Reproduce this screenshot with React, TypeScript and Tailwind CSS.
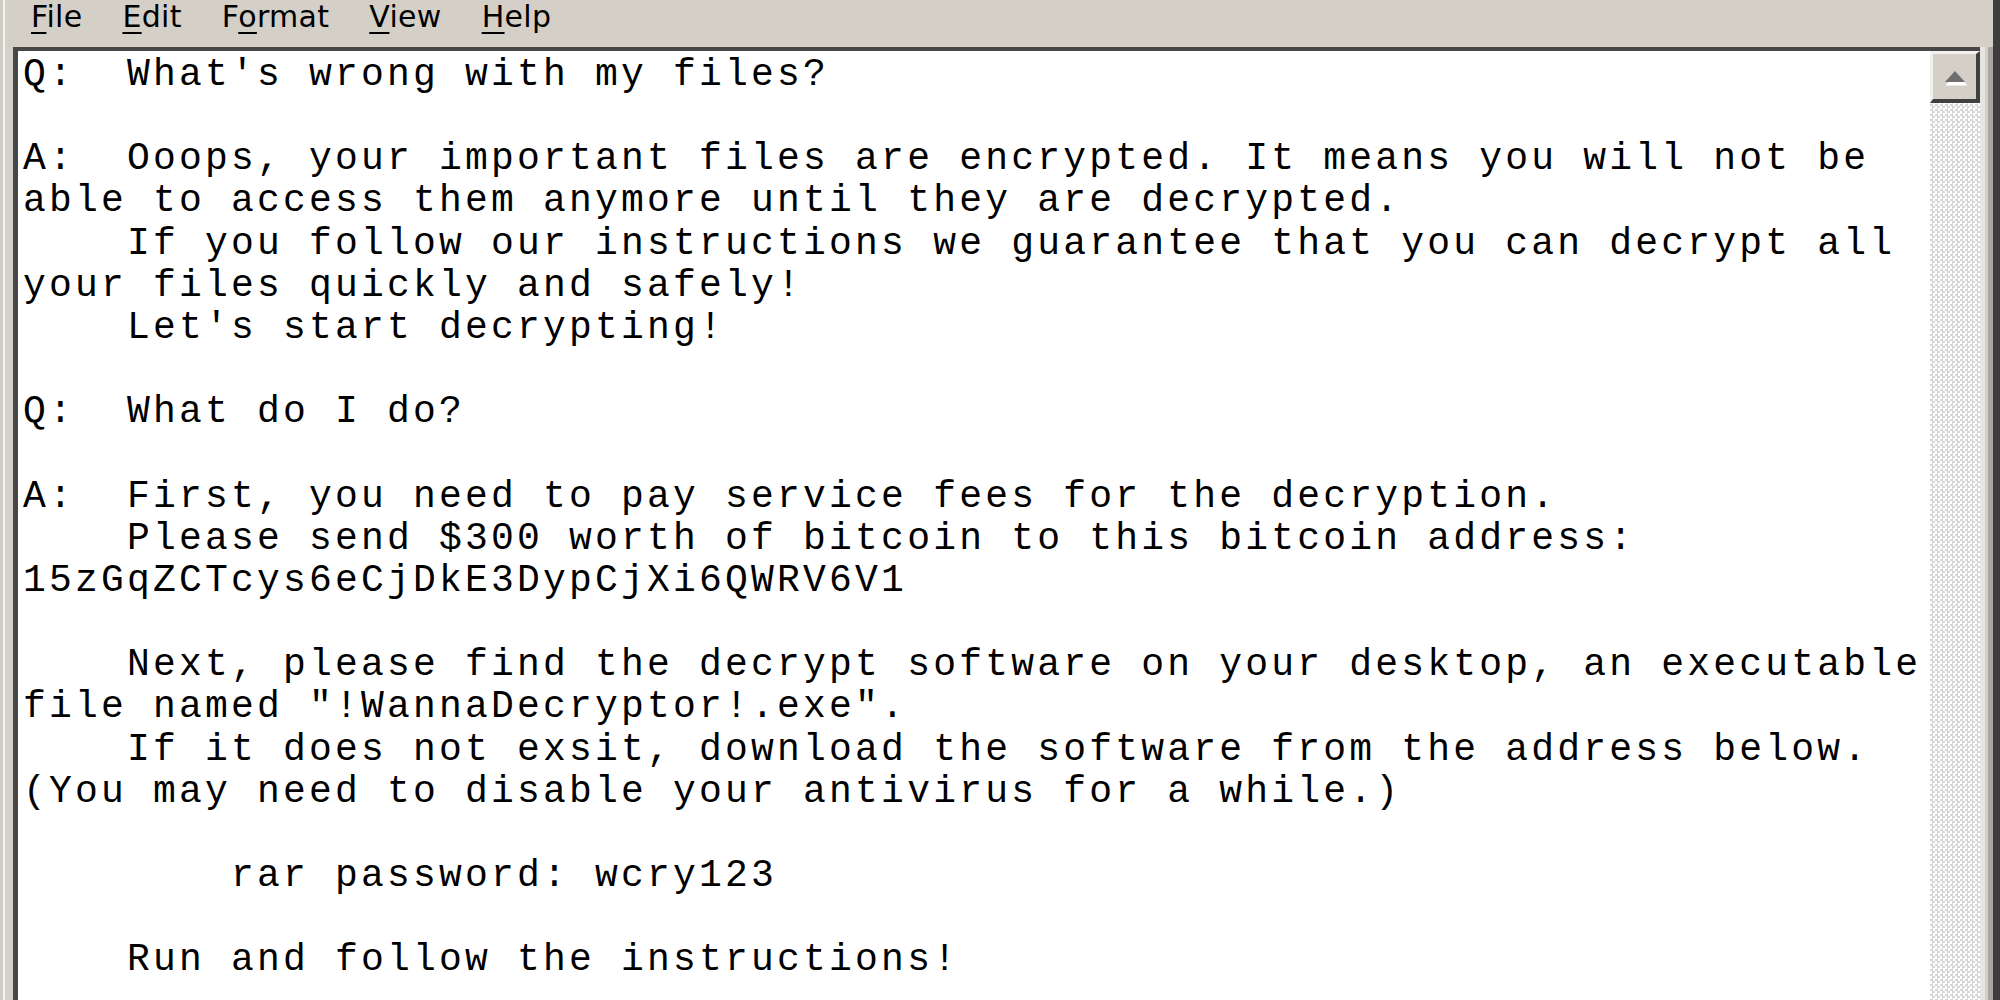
const noteText = `Q:  What's wrong with my files?

A:  Ooops, your important files are encrypted. It means you will not be
able to access them anymore until they are decrypted.
    If you follow our instructions we guarantee that you can decrypt all
your files quickly and safely!
    Let's start decrypting!

Q:  What do I do?

A:  First, you need to pay service fees for the decryption.
    Please send $300 worth of bitcoin to this bitcoin address:
15zGqZCTcys6eCjDkE3DypCjXi6QWRV6V1

    Next, please find the decrypt software on your desktop, an executable
file named "!WannaDecryptor!.exe".
    If it does not exsit, download the software from the address below.
(You may need to disable your antivirus for a while.)

        rar password: wcry123

    Run and follow the instructions!`;

const menus = [
  { key: "F", rest: "ile", before: "" },
  { key: "E", rest: "dit", before: "" },
  { key: "o", rest: "rmat", before: "F" },
  { key: "V", rest: "iew", before: "" },
  { key: "H", rest: "elp", before: "" },
];

const UpArrow = () => (
  <svg width="24" height="18" viewBox="0 0 24 18">
    <polygon points="12,3 23,16 1,16" fill="#ffffff" transform="translate(1.5,1.5)" />
    <polygon points="12,3 22,14 2,14" fill="#6e6e6e" />
  </svg>
);

const App = () => {
  return (
    <div className="w-[2000px] h-[1000px] bg-[#d4d0c8] flex overflow-hidden">
      {/* window left frame */}
      <div className="w-[13px] h-full flex-shrink-0 bg-[#d4d0c8] border-l-[3px] border-[#cfccc4]">
        <div className="h-full w-[2px] bg-[#f4f3ef]" />
      </div>

      <div className="flex-1 flex flex-col min-w-0">
        {/* menu bar */}
        <div className="h-[47px] flex-shrink-0 flex items-start pl-[18px] gap-[40px] font-['DejaVu_Sans',sans-serif] text-[30px] leading-[34px] tracking-[0.3px] text-black">
          {menus.map((m) => (
            <span key={m.key + m.rest}>
              {m.before}
              <span className="underline underline-offset-[5px] decoration-[2px]">{m.key}</span>
              {m.rest}
            </span>
          ))}
        </div>

        {/* edit area + scrollbar */}
        <div className="flex-1 flex min-h-0">
          <div className="flex-1 flex border-t-[4px] border-l-[5px] border-[#474747] min-w-0">
            <div className="flex-1 bg-white overflow-hidden pl-[5px] pt-[3px]">
              <pre className="font-['Liberation_Mono',monospace] text-[38px] leading-[42.15px] tracking-[3.2px] text-black whitespace-pre">
                {noteText}
              </pre>
            </div>

            <div className="w-[50px] flex-shrink-0 flex flex-col bg-[repeating-conic-gradient(#d6d6d6_0%_25%,#ffffff_0%_50%)] bg-[length:5px_5px]">
              <div className="h-[52px] flex-shrink-0 bg-[#d4d0c8] border-t-[3px] border-l-[3px] border-[#f2f1ed] border-r-[4px] border-b-[4px] border-r-[#404040] border-b-[#404040] flex items-center justify-center">
                <UpArrow />
              </div>
            </div>
          </div>
          <div className="w-[13px] flex-shrink-0 flex">
            <div className="w-[5px] bg-[#e6e5e1]" />
            <div className="w-[3px] bg-[#d4d0c8]" />
            <div className="w-[5px] bg-[#a9a7a1]" />
          </div>
        </div>
      </div>

      {/* window right frame */}
      <div className="w-[7px] h-full flex-shrink-0 bg-[#3e3e3e]" />
    </div>
  );
};

export default App;
